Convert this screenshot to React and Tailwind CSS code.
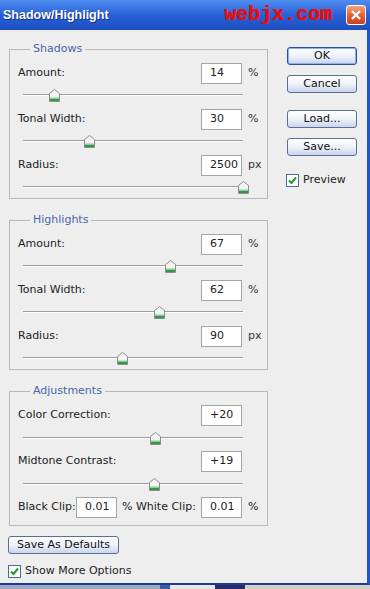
const font = { fontFamily: '"DejaVu Sans", Verdana, sans-serif' };

const shadows = [
  { label: "Amount:", value: "14", unit: "%", pct: 14 },
  { label: "Tonal Width:", value: "30", unit: "%", pct: 30 },
  { label: "Radius:", value: "2500", unit: "px", pct: 100 },
];

const highlights = [
  { label: "Amount:", value: "67", unit: "%", pct: 67 },
  { label: "Tonal Width:", value: "62", unit: "%", pct: 62 },
  { label: "Radius:", value: "90", unit: "px", pct: 45 },
];

const adjustments = [
  { label: "Color Correction:", value: "+20", unit: "", pct: 60 },
  { label: "Midtone Contrast:", value: "+19", unit: "", pct: 59.5 },
];

const Thumb = () => (
  <svg width="11" height="13" viewBox="0 0 11 13">
    <path d="M5.5 0.5 L10.5 4.5 V12.5 H0.5 V4.5 Z" fill="#f4f4f4" stroke="#8c8c8c" />
    <rect x="1" y="9.5" width="9" height="2.5" fill="#2e9a48" />
    <line x1="1" y1="9" x2="10" y2="9" stroke="#8fcb9c" />
  </svg>
);

const Slider = ({ pct, tall }) => (
  <div className={`relative ml-[5px] w-[220px] ${tall ? "h-[22px]" : "h-[20px]"}`}>
    <div className={`absolute left-0 right-0 h-[1px] bg-[#9c9c9c] ${tall ? "top-[11px]" : "top-[10px]"}`} />
    <div className={`absolute left-0 right-0 h-[1px] bg-white ${tall ? "top-[12px]" : "top-[11px]"}`} />
    <div
      className={`absolute ${tall ? "top-[6px]" : "top-[5px]"}`}
      style={{ left: `calc(${pct}% - 5px)` }}
    >
      <Thumb />
    </div>
  </div>
);

const Input = ({ value }) => (
  <div className="w-[41px] h-[21px] bg-white border border-[#a5a5a5] flex items-center pl-[8px] text-[#222]">
    {value}
  </div>
);

const Row = ({ item, tall, first }) => (
  <div className={first ? "" : tall ? "mt-[3px]" : "mt-[5px]"}>
    <div className="flex items-center h-[21px]">
      <span className="flex-1 text-[#222]">{item.label}</span>
      <Input value={item.value} />
      <span className="w-[18px] pl-[6px] text-[#333]">{item.unit}</span>
    </div>
    <Slider pct={item.pct} tall={tall} />
  </div>
);

const Group = ({ title, children, className }) => (
  <fieldset className={`w-[259px] border border-[#b9b9b9] pl-[8px] pr-[7px] pt-[7px] pb-[2px] ${className}`}>
    <legend className="ml-[12px] px-[3px] leading-[14px] text-[#4866a8]">{title}</legend>
    {children}
  </fieldset>
);

const Button = ({ children, primary, className }) => (
  <div
    className={`h-[18px] flex items-center justify-center rounded-[3px] border text-[#111] bg-gradient-to-b from-white via-[#eef2fa] to-[#c9d5ec] ${
      primary ? "border-[#2a4f9c] shadow-[inset_0_0_0_1px_#8fb0e8]" : "border-[#5a6e96]"
    } ${className}`}
  >
    {children}
  </div>
);

const Check = () => (
  <div className="w-[13px] h-[13px] bg-white border border-[#4d6d95] flex items-center justify-center">
    <svg width="9" height="9" viewBox="0 0 9 9">
      <path d="M1 4.5 L3.5 7 L8 1.5" fill="none" stroke="#1f9a2c" strokeWidth="2" />
    </svg>
  </div>
);

export default function App() {
  return (
    <div className="w-[370px] h-[589px] flex flex-col bg-[#eeeeee] text-[11px] overflow-hidden" style={font}>
      {/* title bar */}
      <div className="h-[30px] flex items-center bg-gradient-to-b from-[#4f8ef0] via-[#2860d8] to-[#1e4fc0] pl-[3px] pr-[4px]">
        <span
          className="text-white font-bold text-[12.5px] [text-shadow:1px_1px_#15307a]"
          style={{ fontFamily: '"Liberation Sans", Arial, sans-serif' }}
        >
          Shadow/Highlight
        </span>
        <span
          className="ml-auto text-[#e31010] font-bold text-[20px] leading-none [text-shadow:0.5px_0_#e31010]"
          style={{ fontFamily: '"Liberation Mono", "Courier New", monospace' }}
        >
          webjx.com
        </span>
        <div className="ml-[14px] w-[20px] h-[20px] rounded-[3px] border border-white bg-gradient-to-b from-[#f3a27a] via-[#e3643c] to-[#c8421e] flex items-center justify-center">
          <svg width="12" height="12" viewBox="0 0 12 12">
            <path d="M2 2 L10 10 M10 2 L2 10" stroke="white" strokeWidth="2.2" />
          </svg>
        </div>
      </div>

      {/* body */}
      <div className="flex-1 flex border-r-[3px] border-[#2453c4] border-b-[2px] border-b-[#1c3c8c]">
        <div className="pl-[9px] pt-[12px]">
          <Group title="Shadows">
            {shadows.map((s, i) => (
              <Row key={s.label} item={s} first={i === 0} />
            ))}
          </Group>
          <Group title="Highlights" className="mt-[14px]">
            {highlights.map((s, i) => (
              <Row key={s.label} item={s} first={i === 0} />
            ))}
          </Group>
          <Group title="Adjustments" className="mt-[14px] pb-[7px]">
            {adjustments.map((s, i) => (
              <Row key={s.label} item={s} tall first={i === 0} />
            ))}
            <div className="mt-[3px] flex items-center h-[21px] text-[#222]">
              <span className="w-[58px]">Black Clip:</span>
              <Input value="0.01" />
              <span className="flex-1 pl-[5px]">% White Clip:</span>
              <Input value="0.01" />
              <span className="w-[18px] pl-[6px]">%</span>
            </div>
          </Group>

          <Button className="mt-[10px] -ml-[1px] w-[111px]">Save As Defaults</Button>
          <div className="mt-[9px] -ml-[1px] flex items-center gap-[4px] text-[#222]">
            <Check />
            <span>Show More Options</span>
          </div>
        </div>

        <div className="ml-[19px] pt-[17px] flex flex-col">
          <Button primary className="w-[70px]">OK</Button>
          <Button className="w-[70px] mt-[10px]">Cancel</Button>
          <Button className="w-[70px] mt-[17px]">Load...</Button>
          <Button className="w-[70px] mt-[10px]">Save...</Button>
          <div className="mt-[16px] -ml-[1px] flex items-center gap-[4px] text-[#222]">
            <Check />
            <span>Preview</span>
          </div>
        </div>
      </div>

      {/* strip below window */}
      <div className="h-[4px] flex bg-[#d4d0c8]">
        <div className="w-[160px] bg-[#9aa8c4]" />
        <div className="w-[10px] bg-[#3a5aa8]" />
        <div className="w-[45px] bg-[#e8e8e8]" />
        <div className="w-[30px] bg-[#2a2a6a]" />
      </div>
    </div>
  );
}
